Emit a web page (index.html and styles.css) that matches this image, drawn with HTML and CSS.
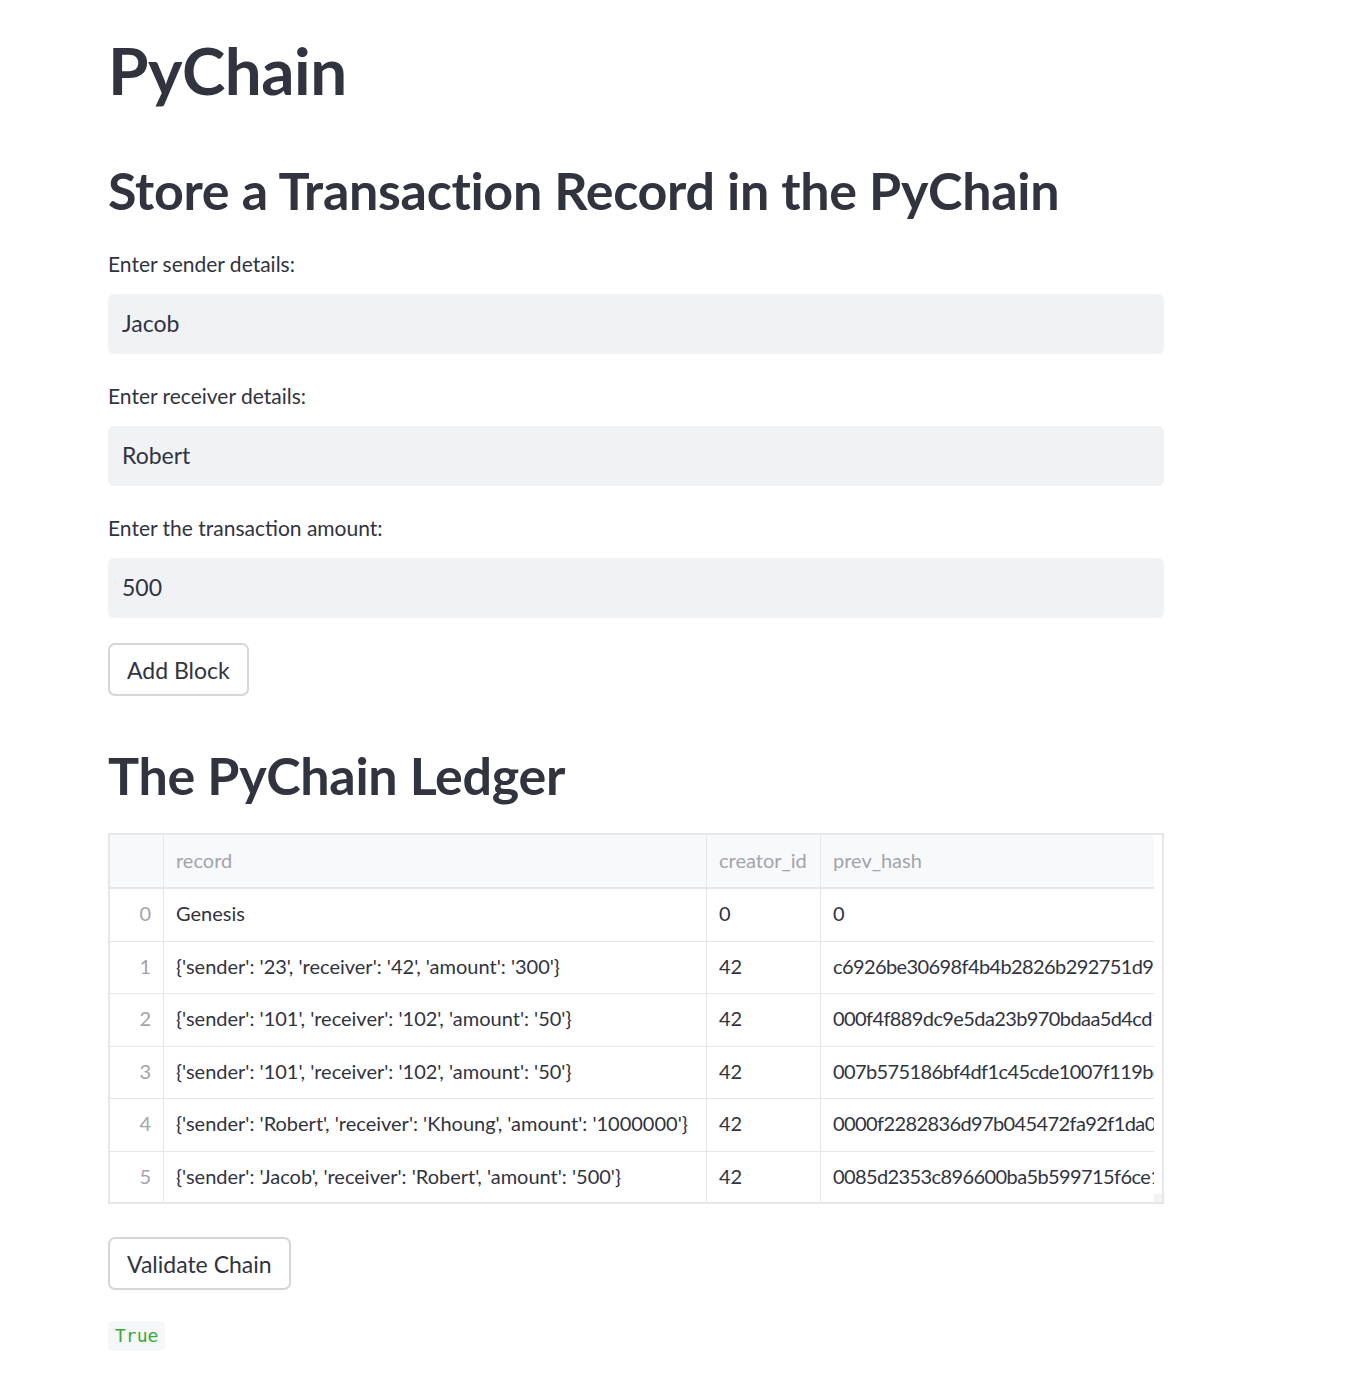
FILE: index.html
```html
<!DOCTYPE html>
<html lang="en">
<head>
<meta charset="utf-8">
<title>PyChain</title>
<link rel="stylesheet" href="styles.css">
</head>
<body>
<main class="page">
  <h1 class="title">PyChain</h1>
  <h2 class="heading heading-store">Store a Transaction Record in the PyChain</h2>

  <div class="field">
    <label class="field-label">Enter sender details:</label>
    <div class="field-input">Jacob</div>
  </div>
  <div class="field">
    <label class="field-label">Enter receiver details:</label>
    <div class="field-input">Robert</div>
  </div>
  <div class="field">
    <label class="field-label">Enter the transaction amount:</label>
    <div class="field-input">500</div>
  </div>

  <button class="btn btn-add">Add Block</button>

  <h2 class="heading heading-ledger">The PyChain Ledger</h2>

  <div class="table-wrap">
    <div class="grid">
      <div class="hd idx"></div>
      <div class="hd">record</div>
      <div class="hd">creator_id</div>
      <div class="hd">prev_hash</div>

      <div class="cell idx">0</div>
      <div class="cell">Genesis</div>
      <div class="cell">0</div>
      <div class="cell hash">0</div>

      <div class="cell idx">1</div>
      <div class="cell">{'sender': '23', 'receiver': '42', 'amount': '300'}</div>
      <div class="cell">42</div>
      <div class="cell hash">c6926be30698f4b4b2826b292751d95a</div>

      <div class="cell idx">2</div>
      <div class="cell">{'sender': '101', 'receiver': '102', 'amount': '50'}</div>
      <div class="cell">42</div>
      <div class="cell hash">000f4f889dc9e5da23b970bdaa5d4cd1</div>

      <div class="cell idx">3</div>
      <div class="cell">{'sender': '101', 'receiver': '102', 'amount': '50'}</div>
      <div class="cell">42</div>
      <div class="cell hash">007b575186bf4df1c45cde1007f119bc</div>

      <div class="cell idx">4</div>
      <div class="cell">{'sender': 'Robert', 'receiver': 'Khoung', 'amount': '1000000'}</div>
      <div class="cell">42</div>
      <div class="cell hash">0000f2282836d97b045472fa92f1da09</div>

      <div class="cell idx last">5</div>
      <div class="cell last">{'sender': 'Jacob', 'receiver': 'Robert', 'amount': '500'}</div>
      <div class="cell last">42</div>
      <div class="cell hash last">0085d2353c896600ba5b599715f6ce19</div>
    </div>
    <div class="gutter"><span class="corner"></span></div>
  </div>

  <button class="btn btn-validate">Validate Chain</button>

  <div class="result"><code class="code-true">True</code></div>
</main>
</body>
</html>
```

FILE: styles.css
```css
* { box-sizing: border-box; }

html, body {
  margin: 0;
  padding: 0;
  background: #ffffff;
}

body {
  font-family: "Lato", "Source Sans Pro", "Liberation Sans", sans-serif;
  color: #31333f;
}

.page {
  width: 1056px;
  margin: 0 0 0 108px;
  padding: 30px 0 40px;
  display: flex;
  flex-direction: column;
  align-items: flex-start;
}

.title {
  margin: 0;
  font-size: 65.5px;
  line-height: 80px;
  font-weight: 700;
  letter-spacing: -0.5px;
}

.heading {
  margin: 0;
  font-size: 52px;
  line-height: 67px;
  font-weight: 700;
  letter-spacing: -0.3px;
}

.heading-store { margin-top: 47px; }
.heading-ledger { margin-top: 46px; }

.field {
  width: 100%;
  display: flex;
  flex-direction: column;
  margin-top: 27px;
}
.field + .field { margin-top: 29px; }

.field-label {
  font-size: 21px;
  line-height: 25px;
  margin-bottom: 18px;
}

.field-input {
  width: 100%;
  height: 60px;
  background: #f0f2f6;
  border-radius: 6px;
  padding: 0 14px;
  font-size: 23px;
  line-height: 58px;
}

.btn {
  font-family: inherit;
  color: #31333f;
  background: #ffffff;
  border: 2px solid #d5d6d8;
  border-radius: 7px;
  height: 53px;
  padding: 0 17px;
  font-size: 23px;
  cursor: pointer;
}
.btn-add { margin-top: 25px; }
.btn-validate { margin-top: 33px; }

.table-wrap {
  margin-top: 24px;
  width: 1056px;
  height: 371px;
  border: 2px solid #e6e7ea;
  display: flex;
  overflow: hidden;
}

.grid {
  display: grid;
  grid-template-columns: 54px 543px 114px 333px;
  grid-template-rows: 54px repeat(6, 52.5px);
  width: 1044px;
  flex: none;
}

.gutter {
  flex: 1;
  position: relative;
  background: #ffffff;
}
.corner {
  position: absolute;
  right: 0;
  bottom: 0;
  width: 8px;
  height: 8px;
  background: #f3f3f5;
}

.hd, .cell {
  font-size: 20px;
  padding: 0 12px 3px;
  display: flex;
  align-items: center;
  white-space: nowrap;
  overflow: hidden;
  border-right: 1px solid #e6e7ea;
  border-bottom: 1.5px solid #e6e7ea;
}
.hd:nth-child(4n), .cell:nth-child(4n) { border-right: none; }

.hd {
  background: #f8f9fb;
  color: #a2a4ab;
  border-bottom: 2px solid #e6e7ea;
}

.cell { color: #31333f; }
.cell.last { border-bottom: none; }
.cell.hash { letter-spacing: -0.6px; }

.cell.idx {
  justify-content: flex-end;
  color: #a2a4ab;
}

.result { margin-top: 31px; }

.code-true {
  display: inline-block;
  font-family: "DejaVu Sans Mono", "Liberation Mono", monospace;
  font-size: 18px;
  line-height: 30px;
  padding: 0 7px;
  color: #3aa83a;
  background: #f6f7f9;
  border-radius: 5px;
}
```
